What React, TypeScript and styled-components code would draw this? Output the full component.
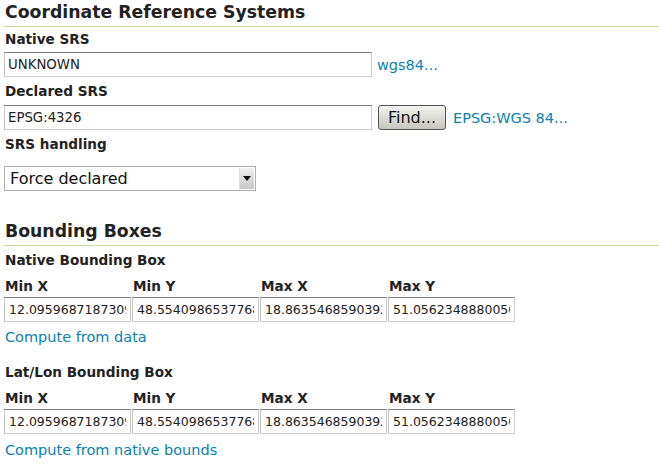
import React from "react";
import styled, { createGlobalStyle } from "styled-components";

const Global = createGlobalStyle`
  html, body { margin: 0; padding: 0; background: #fff; }
  body { font-family: "DejaVu Sans", Verdana, sans-serif; color: #222; }
`;

const Page = styled.div`
  padding: 0 0 0 4px;
`;

const Heading = styled.h2<{ $top: number }>`
  margin: ${(p) => p.$top}px 0 0 0;
  padding: 0 1px 3px;
  font-size: 17.3px;
  line-height: 22px;
  font-weight: bold;
  color: #222;
  border-bottom: 1px solid #c6de9c;
`;

const Label = styled.div<{ $top?: number }>`
  font-size: 13.6px;
  font-weight: bold;
  line-height: 16px;
  padding-left: 1px;
  margin-top: ${(p) => p.$top ?? 6}px;
  color: #222;
`;

const Row = styled.div<{ $top?: number }>`
  display: flex;
  align-items: center;
  margin-top: ${(p) => p.$top ?? 5}px;
`;

const TextInput = styled.input<{ $w: number }>`
  box-sizing: border-box;
  width: ${(p) => p.$w}px;
  height: 25px;
  margin: 0;
  padding: 0 3px;
  font-family: "DejaVu Sans", Verdana, sans-serif;
  font-size: 13.3px;
  color: #222;
  background: #fff;
  border: 1px solid #cccccc;
  border-top-color: #7c7c7c;
  border-left-color: #c4c4c4;
  outline: none;
`;

const Link = styled.a<{ $gap?: number }>`
  font-size: 14.5px;
  color: #0b7fb0;
  text-decoration: none;
  margin-left: ${(p) => p.$gap ?? 5}px;
  cursor: pointer;
`;

const Button = styled.button`
  box-sizing: border-box;
  height: 25px;
  width: 68px;
  margin-left: 6px;
  padding: 0;
  font-family: "DejaVu Sans", Verdana, sans-serif;
  font-size: 16px;
  color: #111;
  border: 1px solid #555;
  border-radius: 3px;
  background: linear-gradient(#f4f4f0, #c6c6be);
`;

const Select = styled.div`
  box-sizing: border-box;
  margin-top: 14px;
  width: 252px;
  height: 25px;
  display: flex;
  border: 1px solid #b0b0b0;
  background: #fff;
`;

const SelectText = styled.div`
  flex: 1;
  font-size: 16px;
  line-height: 23px;
  padding-left: 5px;
  color: #111;
`;

const SelectArrow = styled.div`
  width: 14px;
  margin: 1px 1px 1px 0;
  background: linear-gradient(#f0f0f0, #c8c8c8);
  border-left: 1px solid #ddd;
  display: flex;
  align-items: center;
  justify-content: center;
  svg { display: block; }
`;

const Grid = styled.div`
  display: grid;
  grid-template-columns: repeat(4, 127px);
  column-gap: 1px;
  margin-top: 10px;
`;

const ColLabel = styled.div`
  font-size: 13.6px;
  font-weight: bold;
  line-height: 16px;
  padding-left: 1px;
  margin-bottom: 3px;
`;

const BoxInput = styled(TextInput)`
  width: 127px;
  padding: 0 4px;
  font-size: 12.5px;
`;

const ComputeLink = styled(Link)<{ $top?: number }>`
  display: block;
  line-height: 18px;
  margin: ${(p) => p.$top ?? 6}px 0 0 1px;
`;

const nums = [
  "12.095968718730935",
  "48.554098653776805",
  "18.863546859039294",
  "51.056234888005066",
];
const cols = ["Min X", "Min Y", "Max X", "Max Y"];

const BBox: React.FC = () => (
  <Grid>
    {cols.map((c) => (
      <ColLabel key={c}>{c}</ColLabel>
    ))}
    {nums.map((n, i) => (
      <BoxInput key={i} $w={127} defaultValue={n} />
    ))}
  </Grid>
);

export default function App() {
  return (
    <Page>
      <Global />
      <Heading $top={1}>Coordinate Reference Systems</Heading>
      <Label $top={4}>Native SRS</Label>
      <Row $top={5}>
        <TextInput $w={368} defaultValue="UNKNOWN" />
        <Link>wgs84...</Link>
      </Row>
      <Label $top={6}>Declared SRS</Label>
      <Row $top={6}>
        <TextInput $w={368} defaultValue="EPSG:4326" />
        <Button>Find...</Button>
        <Link $gap={7}>EPSG:WGS 84...</Link>
      </Row>
      <Label $top={6}>SRS handling</Label>
      <Select>
        <SelectText>Force declared</SelectText>
        <SelectArrow>
          <svg width="8" height="5" viewBox="0 0 8 5">
            <path d="M0 0 H8 L4 5 Z" fill="#111" />
          </svg>
        </SelectArrow>
      </Select>
      <Heading $top={29}>Bounding Boxes</Heading>
      <Label $top={6}>Native Bounding Box</Label>
      <BBox />
      <ComputeLink>Compute from data</ComputeLink>
      <Label $top={18}>Lat/Lon Bounding Box</Label>
      <BBox />
      <ComputeLink $top={7}>Compute from native bounds</ComputeLink>
    </Page>
  );
}
